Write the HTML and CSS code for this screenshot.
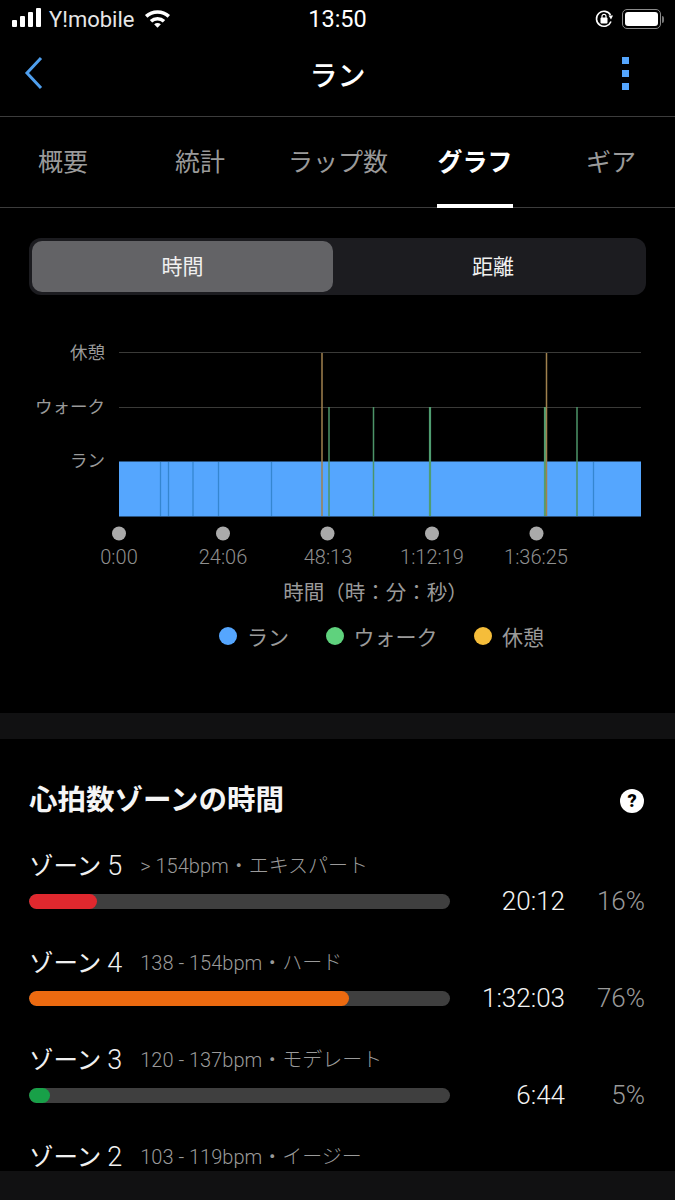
FILE: index.html
```html
<!DOCTYPE html>
<html lang="ja">
<head>
    <meta charset="UTF-8">
    <meta name="viewport" content="width=device-width, initial-scale=1.0">
    <title>ラン</title>
    <link rel="stylesheet" href="styles.css">
</head>
<body>
<div class="screen">
    <div class="status">
        <div class="status-left">
            <svg class="signal" width="30" height="20" viewBox="0 0 30 20"><rect x="0" y="12" width="5" height="7" rx="1"/><rect x="8" y="8" width="5" height="11" rx="1"/><rect x="16" y="4" width="5" height="15" rx="1"/><rect x="24" y="0" width="5" height="19" rx="1"/></svg>
            <span class="carrier">Y!mobile</span>
            <svg class="wifi" width="27" height="20" viewBox="0 0 28 20"><path d="M1 7 A19 19 0 0 1 27 7 L24.5 9.8 A15.5 15.5 0 0 0 3.5 9.8 Z"/><path d="M6 12 A12 12 0 0 1 22 12 L19.5 14.6 A8.5 8.5 0 0 0 8.5 14.6 Z"/><path d="M10.5 16.6 A5.5 5.5 0 0 1 17.5 16.6 L14 20 Z"/></svg>
        </div>
        <div class="clock">13:50</div>
        <div class="status-right">
            <svg width="18" height="20" viewBox="0 0 18 20"><path d="M15.5 6 A7.5 7.5 0 1 0 16 12.5" fill="none" stroke="#fff" stroke-width="1.6"/><path d="M13.5 6.5 L18 6.5 L16 10.5 Z" fill="#fff"/><rect x="5.5" y="8.5" width="7" height="6" rx="1" fill="#fff"/><path d="M7 9 V7.3 A2 2 0 0 1 11 7.3 V9" fill="none" stroke="#fff" stroke-width="1.2"/></svg>
            <div class="battery"><div class="battery-fill"></div></div>
            <div class="battery-tip"></div>
        </div>
    </div>

    <div class="nav">
        <svg class="back" width="20" height="34" viewBox="0 0 20 34"><path d="M17 2 L3 17 L17 32" fill="none" stroke="#4f9fee" stroke-width="3"/></svg>
        <div class="nav-title">ラン</div>
        <div class="more"><span></span><span></span><span></span></div>
    </div>

    <div class="tabs">
        <div class="tab tab-1">概要</div>
        <div class="tab tab-2">統計</div>
        <div class="tab tab-3">ラップ数</div>
        <div class="tab tab-4 active">グラフ</div>
        <div class="tab tab-5">ギア</div>
    </div>

    <div class="chart-section">
        <div class="segment">
            <div class="seg-item selected">時間</div>
            <div class="seg-item">距離</div>
        </div>

        <svg class="chart" width="675" height="360" viewBox="0 295 675 360">
            <g class="row-labels">
                <text x="105" y="359">休憩</text>
                <text x="105" y="413">ウォーク</text>
                <text x="105" y="467">ラン</text>
            </g>
            <line x1="119" x2="641" y1="352.5" y2="352.5" stroke="#3a3a38"/>
            <line x1="119" x2="641" y1="407.5" y2="407.5" stroke="#3a3a38"/>
            <rect x="119" y="461.5" width="522" height="55" fill="#55a6fe"/>
            <g stroke="#3586d0" stroke-width="1.3">
                <line x1="160.5" x2="160.5" y1="462" y2="516"/>
                <line x1="168.5" x2="168.5" y1="462" y2="516"/>
                <line x1="193" x2="193" y1="462" y2="516"/>
                <line x1="218.5" x2="218.5" y1="462" y2="516"/>
                <line x1="271.5" x2="271.5" y1="462" y2="516"/>
                <line x1="593.5" x2="593.5" y1="462" y2="516"/>
            </g>
            <g stroke="#4c9468" stroke-width="1.5">
                <line x1="329" x2="329" y1="407" y2="516"/>
                <line x1="373.5" x2="373.5" y1="407" y2="516"/>
                <line x1="577" x2="577" y1="407" y2="516"/>
            </g>
            <g stroke="#4f9d70" stroke-width="2.2">
                <line x1="430" x2="430" y1="407" y2="516"/>
                <line x1="545" x2="545" y1="407" y2="516"/>
            </g>
            <g stroke="#a0814e" stroke-width="1.5">
                <line x1="322" x2="322" y1="353" y2="516"/>
                <line x1="546.5" x2="546.5" y1="353" y2="516"/>
            </g>
            <g fill="#aaaaaa">
                <circle cx="119" cy="533.5" r="7"/>
                <circle cx="223" cy="533.5" r="7"/>
                <circle cx="327.5" cy="533.5" r="7"/>
                <circle cx="432" cy="533.5" r="7"/>
                <circle cx="536.5" cy="533.5" r="7"/>
            </g>
            <g class="tick-labels">
                <text x="119" y="564">0:00</text>
                <text x="223" y="564">24:06</text>
                <text x="328" y="564">48:13</text>
                <text x="432" y="564">1:12:19</text>
                <text x="536" y="564">1:36:25</text>
            </g>
        </svg>

        <div class="axis-title">時間（時：分：秒）</div>
        <div class="legend">
            <div class="legend-item"><span class="dot dot-run"></span>ラン</div>
            <div class="legend-item"><span class="dot dot-walk"></span>ウォーク</div>
            <div class="legend-item"><span class="dot dot-rest"></span>休憩</div>
        </div>
    </div>

    <div class="divider"></div>

    <div class="zones">
        <div class="zones-head">
            <h2>心拍数ゾーンの時間</h2>
            <div class="help">?</div>
        </div>

        <div class="zone">
            <div class="zone-label"><span class="zone-name">ゾーン<span class="zone-num">5</span></span><span class="zone-range">&gt; 154bpm・エキスパート</span></div>
            <div class="zone-row">
                <div class="bar"><div class="fill fill-red"></div></div>
                <div class="time">20:12</div>
                <div class="pct">16%</div>
            </div>
        </div>
        <div class="zone">
            <div class="zone-label"><span class="zone-name">ゾーン<span class="zone-num">4</span></span><span class="zone-range">138 - 154bpm・ハード</span></div>
            <div class="zone-row">
                <div class="bar"><div class="fill fill-orange"></div></div>
                <div class="time">1:32:03</div>
                <div class="pct">76%</div>
            </div>
        </div>
        <div class="zone">
            <div class="zone-label"><span class="zone-name">ゾーン<span class="zone-num">3</span></span><span class="zone-range">120 - 137bpm・モデレート</span></div>
            <div class="zone-row">
                <div class="bar"><div class="fill fill-green"></div></div>
                <div class="time">6:44</div>
                <div class="pct">5%</div>
            </div>
        </div>
        <div class="zone">
            <div class="zone-label"><span class="zone-name">ゾーン<span class="zone-num">2</span></span><span class="zone-range">103 - 119bpm・イージー</span></div>
        </div>
    </div>

    <div class="bottom-bar"></div>
</div>
</body>
</html>
```

FILE: styles.css
```css
* {
    box-sizing: border-box;
}
body {
    margin: 0;
    background-color: #000;
    color: #fff;
    font-family: Roboto, "Noto Sans CJK JP", sans-serif;
}
.screen {
    position: relative;
    width: 675px;
    height: 1200px;
    overflow: hidden;
    background-color: #000;
}

/* status bar */
.status {
    height: 38px;
    padding: 0 11px 0 12px;
    display: flex;
    align-items: center;
    justify-content: space-between;
    position: relative;
}
.status-left {
    display: flex;
    align-items: center;
    gap: 7px;
}
.signal {
    fill: #fff;
    margin-top: -3px;
}
.wifi {
    fill: #fff;
    margin: -2px 0 0 3px;
}
.carrier {
    font-size: 22px;
    color: #e6e6e6;
}
.clock {
    position: absolute;
    left: 0;
    right: 0;
    text-align: center;
    font-size: 23.5px;
}
.status-right {
    display: flex;
    align-items: center;
}
.battery {
    width: 39px;
    height: 20px;
    margin-left: 9px;
    padding: 2px;
    border: 1px solid #8a8a8a;
    border-radius: 5px;
}
.battery-fill {
    width: 100%;
    height: 100%;
    background-color: #fff;
    border-radius: 3px;
}
.battery-tip {
    width: 2px;
    height: 7px;
    margin-left: 1px;
    background-color: #777;
    border-radius: 0 2px 2px 0;
}

/* nav */
.nav {
    height: 79px;
    padding: 0 46px 8px 24px;
    display: flex;
    align-items: center;
    justify-content: space-between;
    position: relative;
    border-bottom: 1px solid #3c3c3c;
}
.nav-title {
    position: absolute;
    left: 0;
    right: 0;
    top: 16px;
    text-align: center;
    font-size: 28px;
    font-weight: 500;
}
.more {
    display: flex;
    flex-direction: column;
    gap: 6px;
}
.more span {
    display: block;
    width: 7px;
    height: 7px;
    background-color: #55a6fe;
}

/* tabs */
.tabs {
    height: 91px;
    position: relative;
    border-bottom: 1px solid #3c3c3c;
}
.tab {
    position: absolute;
    top: 0;
    bottom: -1px;
    padding-top: 29px;
    font-size: 25px;
    line-height: 34px;
    color: #9a9a9a;
    text-align: center;
}
.tab-1 { left: 38px; }
.tab-2 { left: 175px; }
.tab-3 { left: 288px; }
.tab-4 { left: 437px; width: 76px; }
.tab-5 { left: 586px; }
.tab.active {
    color: #fff;
    font-weight: 700;
    border-bottom: 4px solid #fff;
}

/* chart */
.chart-section {
    height: 505px;
    padding-top: 30px;
}
.segment {
    margin: 0 29px;
    height: 57px;
    padding: 3px;
    background-color: #1c1c20;
    border-radius: 12px;
    display: flex;
}
.seg-item {
    flex: 1;
    display: flex;
    align-items: center;
    justify-content: center;
    padding: 0 0 4px 10px;
    font-size: 21px;
    border-radius: 10px;
    color: #f0f0f0;
}
.seg-item.selected {
    flex: 0 0 301px;
    padding-left: 0;
    background-color: #636366;
}
.chart {
    display: block;
}
.row-labels text {
    fill: #9a9a9a;
    font-size: 17.5px;
    text-anchor: end;
}
.tick-labels text {
    fill: #8f8f8f;
    font-size: 20px;
    font-weight: 300;
    text-anchor: middle;
}
.axis-title {
    margin-top: -77px;
    padding-left: 76px;
    text-align: center;
    font-size: 20.5px;
    line-height: 30px;
    color: #9a9a9a;
}
.legend {
    margin-top: 13px;
    height: 30px;
    display: flex;
    padding-left: 219px;
    gap: 36.5px;
}
.legend-item {
    display: flex;
    align-items: center;
    gap: 10px;
    font-size: 21px;
    color: #9a9a9a;
}
.dot {
    width: 18px;
    height: 18px;
    border-radius: 50%;
}
.dot-run { background-color: #55a6fe; }
.dot-walk { background-color: #5fd27d; }
.dot-rest { background-color: #f5bd3a; }

.divider {
    height: 26px;
    background-color: #111112;
}

/* heart rate zones */
.zones {
    padding: 0 30px 0 29px;
}
.zones-head {
    height: 108px;
    padding-top: 44px;
    display: flex;
    justify-content: space-between;
}
.zones-head h2 {
    margin: 0;
    font-size: 28.5px;
    line-height: 36px;
    font-weight: 700;
    color: #f5f5f5;
}
.help {
    width: 24px;
    height: 24px;
    margin: 6px 1px 0 0;
    border-radius: 50%;
    background-color: #fff;
    color: #000;
    font-size: 18px;
    font-weight: 900;
    line-height: 24px;
    text-align: center;
}
.zone {
    height: 97px;
}
.zone-label {
    height: 36px;
    display: flex;
    align-items: center;
    gap: 18px;
    padding: 0 0 2px;
}
.zone-name {
    font-size: 24.5px;
    color: #f0f0f0;
}
.zone-num {
    margin-left: 6px;
    font-size: 27px;
    font-weight: 300;
}
.zone-range {
    font-size: 20px;
    font-weight: 300;
    color: #9a9a9a;
}
.zone-row {
    margin-top: 11px;
    display: flex;
    align-items: center;
    height: 15px;
}
.bar {
    flex: 0 0 421px;
    height: 15px;
    background-color: #3f3f3f;
    border-radius: 8px;
    overflow: hidden;
}
.fill {
    height: 100%;
    border-radius: 8px;
}
.fill-red { width: 68px; background-color: #e0282e; }
.fill-orange { width: 320px; background-color: #ec6a10; }
.fill-green { width: 21px; background-color: #18a048; }
.time {
    flex: 0 0 115px;
    margin-top: -2px;
    text-align: right;
    font-size: 26px;
    font-weight: 300;
    color: #f4f4f4;
}
.pct {
    flex: 0 0 80px;
    margin-top: -2px;
    text-align: right;
    font-size: 26px;
    font-weight: 300;
    color: #9a9a9a;
}

.bottom-bar {
    position: absolute;
    left: 0;
    right: 0;
    bottom: 0;
    height: 29px;
    background-color: #111112;
}
```
